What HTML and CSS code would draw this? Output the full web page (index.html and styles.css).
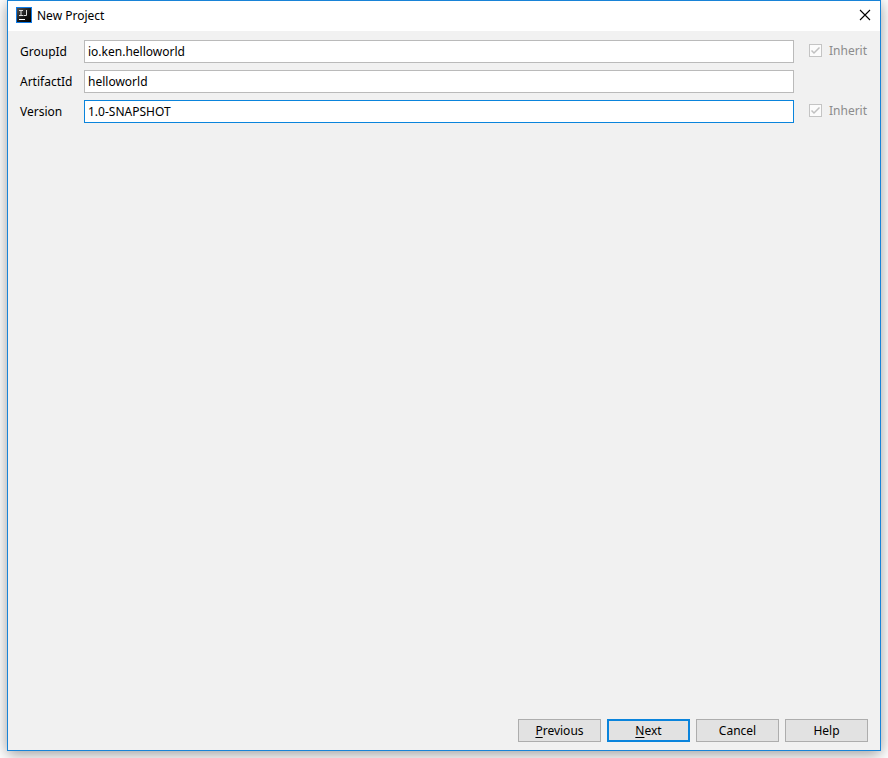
FILE: index.html
```
<!DOCTYPE html>
<html lang="en">
<head>
    <meta charset="UTF-8">
    <meta name="viewport" content="width=device-width, initial-scale=1.0">
    <title>New Project</title>
    <link rel="stylesheet" href="styles.css">
</head>
<body>
    <div class="dialog">
        <header class="title-bar">
            <svg class="logo" width="16" height="16" viewBox="0 0 16 16">
                <defs>
                    <linearGradient id="logo-fill" x1="0" y1="0" x2="1" y2="1">
                        <stop offset="0" stop-color="#555"/>
                        <stop offset="0.6" stop-color="#111"/>
                        <stop offset="1" stop-color="#000"/>
                    </linearGradient>
                </defs>
                <rect x="0.5" y="0.5" width="15" height="15" fill="url(#logo-fill)" stroke="#0f7be8"/>
                <path d="M3 3.500h4M5 3v6M3 8.500h4M10.500 3v5.500h-3" fill="none" stroke="#ddd"/>
                <path d="M3 12.500h6" stroke="#fff"/>
            </svg>
            <h1>New Project</h1>
            <button class="close" type="button" aria-label="Close">
                <svg width="12" height="12" viewBox="0 0 12 12">
                    <path d="M1 1l10 10M11 1L1 11" fill="none" stroke="#000" stroke-width="1.100"/>
                </svg>
            </button>
        </header>

        <form class="content">
            <div class="row">
                <label for="group-id">GroupId</label>
                <input class="field" type="text" id="group-id" value="io.ken.helloworld">
                <label class="inherit"><input type="checkbox" checked disabled>Inherit</label>
            </div>
            <div class="row">
                <label for="artifact-id">ArtifactId</label>
                <input class="field" type="text" id="artifact-id" value="helloworld">
            </div>
            <div class="row">
                <label for="version">Version</label>
                <input class="field active" type="text" id="version" value="1.0-SNAPSHOT">
                <label class="inherit"><input type="checkbox" checked disabled>Inherit</label>
            </div>

            <div class="buttons">
                <button type="button"><u>P</u>revious</button>
                <button type="button" class="default"><u>N</u>ext</button>
                <button type="button">Cancel</button>
                <button type="button">Help</button>
            </div>
        </form>
    </div>
</body>
</html>
```
FILE: styles.css
```
* {
    box-sizing: border-box;
}

body {
    margin: 0;
    padding: 0 7px 7px;
    min-height: 100vh;
    display: flex;
    background-color: #fff;
    color: #000;
    font-family: "Noto Sans", "Open Sans", sans-serif;
    font-size: 12px;
    line-height: 16px;
}

input,
button {
    font: inherit;
    color: inherit;
}

.dialog {
    flex: 1;
    display: flex;
    flex-direction: column;
    background-color: #f1f1f1;
    border: 1px solid #1883d7;
    box-shadow: 0 3px 14px rgba(0, 0, 0, 0.4);
}

/* Title bar */
.title-bar {
    display: flex;
    align-items: flex-start;
    height: 30px;
    padding: 6px 4px 0 8px;
    background-color: #fff;
}

.title-bar h1 {
    flex: 1;
    margin: 0 0 0 5px;
    font-size: 12px;
    font-weight: normal;
    line-height: 18px;
}

.close {
    display: flex;
    padding: 2px 5px;
    border: none;
    background: none;
}

/* Form rows */
.content {
    flex: 1;
    display: flex;
    flex-direction: column;
    gap: 7px;
    padding: 9px 12px 8px;
}

.row {
    display: grid;
    grid-template-columns: 64px 1fr 74px;
    align-items: center;
}

.field {
    width: 100%;
    height: 23px;
    padding: 0 3px;
    border: 1px solid #bababa;
    border-radius: 0;
    background-color: #fff;
    outline: none;
}

.field.active {
    border-color: #0a84dc;
}

.inherit {
    display: flex;
    align-items: center;
    gap: 7px;
    padding: 0 0 2px 15px;
    color: #8c8c8c;
}

.inherit input {
    appearance: none;
    width: 13px;
    height: 13px;
    margin: 0;
    border: 1px solid #c4c4c4;
    background: #fbfbfb url("data:image/svg+xml,%3Csvg xmlns='http://www.w3.org/2000/svg' viewBox='0 0 11 11'%3E%3Cpath d='M1.500 5.500l2.500 2.500 5.500-5.500' fill='none' stroke='%23c0c0c0' stroke-width='1.500'/%3E%3C/svg%3E");
}

/* Bottom buttons */
.buttons {
    display: flex;
    justify-content: flex-end;
    gap: 6px;
    margin-top: auto;
}

.buttons button {
    width: 83px;
    height: 23px;
    padding: 0;
    border: 1px solid #adadad;
    background-color: #e2e2e2;
}

.buttons .default {
    border: 2px solid #0a84dc;
}

.buttons u {
    text-underline-offset: 2px;
}
```
